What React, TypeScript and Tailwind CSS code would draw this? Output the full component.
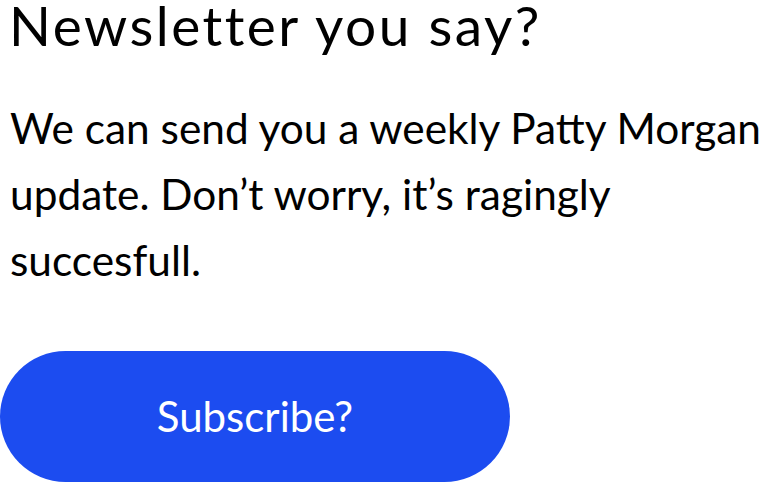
export default function App() {
  return (
    <div className="w-[765px] h-[483px] overflow-hidden bg-white text-black" style={{ fontFamily: "Lato, sans-serif" }}>
      <h1 className="pl-[9px] text-[55px] leading-[50px] tracking-[2.5px] font-normal whitespace-nowrap">Newsletter you say?</h1>
      <p className="mt-[45px] pl-[10px] text-[42.4px] leading-[66px] w-[765px]">
        We can send you a weekly Patty Morgan update. Don’t worry, it’s ragingly succesfull.
      </p>
      <button className="mt-[58px] flex h-[131px] w-[510px] items-center justify-center rounded-full bg-[#1c4cf0] text-[42px] text-white">
        Subscribe?
      </button>
    </div>
  );
}
